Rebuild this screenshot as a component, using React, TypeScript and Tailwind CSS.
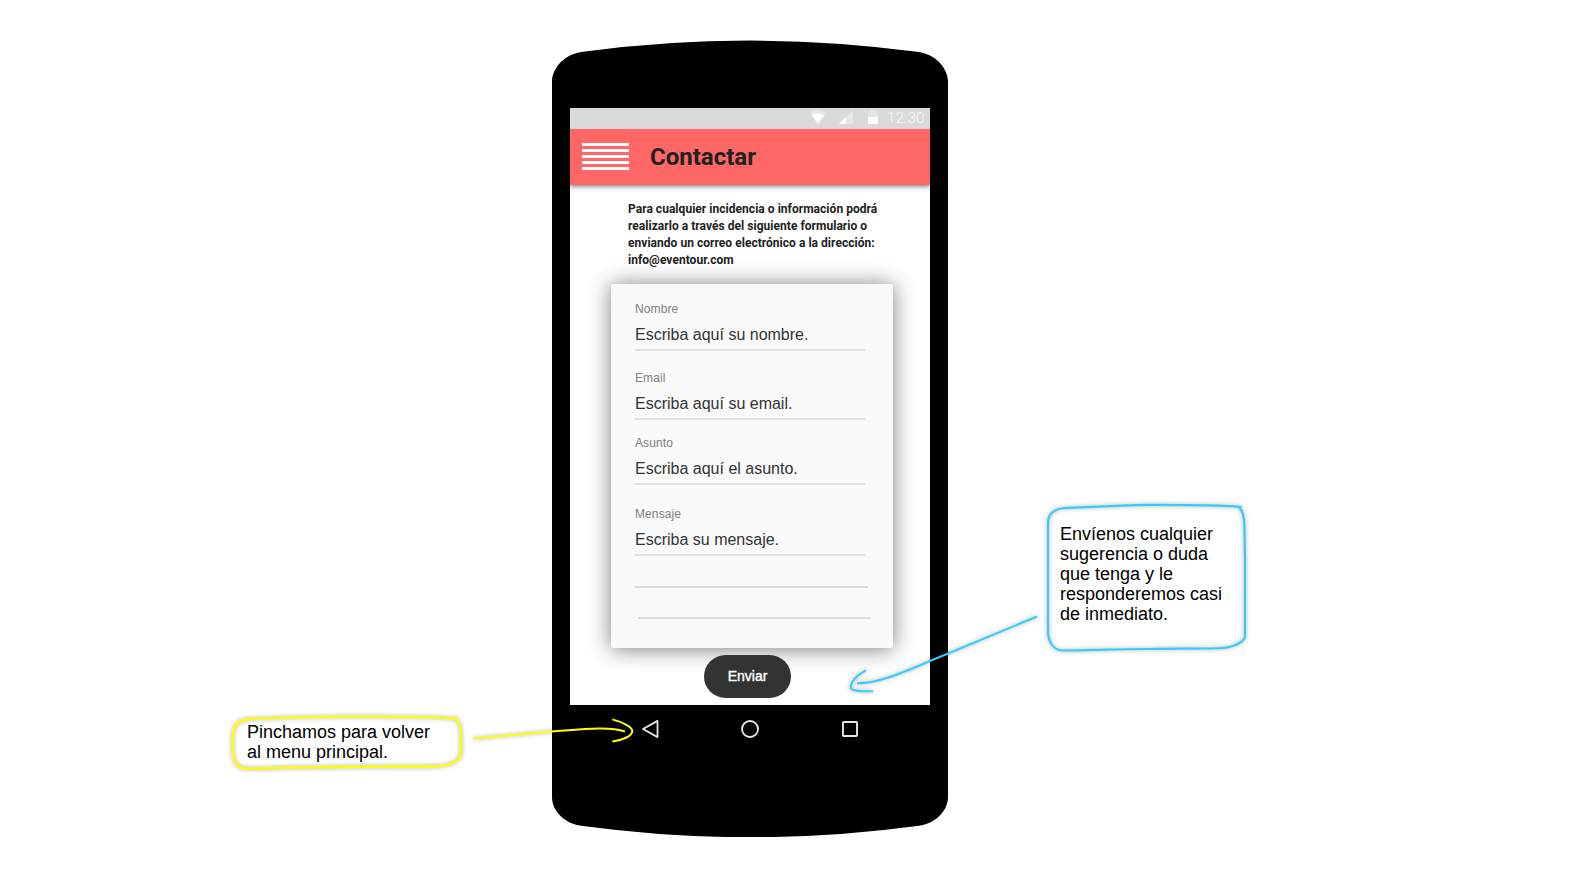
import type { ReactNode } from "react";

const sans = "font-['Liberation_Sans',Arial,sans-serif]";
const roboto = "font-[Roboto,sans-serif]";

function StatusBar() {
  return (
    <div className="relative z-10 flex h-[21px] items-start bg-[#dadada] pl-[240px]">
      <svg className="mt-[2px] h-[14px] w-4 shrink-0" viewBox="0 0 16 14">
        <path d="M0 3.2C4.6 -.6 11.4 -.6 16 3.2L8 14Z" fill="#e6e6e6" />
        <path d="M1.8 5.4C5.7 2.6 10.3 2.6 14.2 5.4L8 13.8Z" fill="#fff" />
      </svg>
      <svg className="ml-[13px] mt-[2px] h-[14px] w-[14px] shrink-0" viewBox="0 0 14 14">
        <path d="M14 0V14H0Z" fill="#e6e6e6" />
        <path d="M7 7V14H0Z" fill="#fff" />
      </svg>
      <svg className="ml-[15px] mt-[2px] h-[14px] w-[10px] shrink-0" viewBox="0 0 10 14">
        <path d="M3 0H7L8 1Q10 1.4 10 3V7H0V3Q0 1.4 2 1Z" fill="#e6e6e6" />
        <path d="M0 7H10V13Q10 14 9 14H1Q0 14 0 13Z" fill="#fff" />
      </svg>
      <span className={`ml-[9px] text-[15px] leading-5 font-light tracking-[0.2px] text-[#f8f8f8] ${roboto}`}>
        12:30
      </span>
    </div>
  );
}

function Header() {
  return (
    <header className="relative flex h-14 shrink-0 items-center bg-[#ff6666] pl-3 shadow-[0_1px_5px_rgba(0,0,0,0.6)]">
      <div className="flex w-[47px] flex-col gap-[3px] pb-px">
        {[0, 1, 2, 3, 4].map((i) => (
          <span key={i} className="h-[3px] bg-white" />
        ))}
      </div>
      <h1 className={`ml-[21px] text-2xl leading-7 font-bold text-[#212121] ${roboto}`}>Contactar</h1>
    </header>
  );
}

function Field({ label, value, className }: { label: string; value: string; className: string }) {
  return (
    <div className={`w-[230px] border-b-2 border-[#e0e0e0] ${className}`}>
      <div className="h-[14px] text-xs leading-[14px] tracking-[0.1px] text-[#808080]">{label}</div>
      <div className="mt-[10px] h-[23px] text-base leading-[18px] text-[#333]">{value}</div>
    </div>
  );
}

function Form() {
  return (
    <div className="ml-[41px] mt-[15px] flex h-[364px] w-[282px] shrink-0 flex-col rounded-[2px] bg-[#fafafa] pl-6 pt-[18px] shadow-[0_1px_22px_rgba(0,0,0,0.52)]">
      <Field label="Nombre" value="Escriba aquí su nombre." className="" />
      <Field label="Email" value="Escriba aquí su email." className="mt-5" />
      <Field label="Asunto" value="Escriba aquí el asunto." className="mt-4" />
      <Field label="Mensaje" value="Escriba su mensaje." className="mt-[22px]" />
      <div className="mt-[30px] h-[2px] w-[233px] bg-[#dcdcdc]" />
      <div className="ml-[3px] mt-[29px] h-[2px] w-[233px] bg-[#dcdcdc]" />
    </div>
  );
}

function NavBar() {
  return (
    <nav className="relative mt-[14px] flex items-center pl-[89px]">
      <svg className="h-5 w-5" viewBox="0 0 20 20" fill="none" stroke="#e6e6e6" strokeWidth="1.8" strokeLinejoin="round">
        <path d="M2 10L16.5 1.9V18.1Z" />
      </svg>
      <svg className="ml-[79px] h-5 w-5" viewBox="0 0 20 20" fill="none" stroke="#e6e6e6" strokeWidth="1.9">
        <circle cx="10" cy="10" r="8" />
      </svg>
      <svg className="ml-[80px] h-5 w-5" viewBox="0 0 20 20" fill="none" stroke="#e6e6e6" strokeWidth="1.9">
        <rect x="3" y="3" width="14" height="14" rx="0.8" />
      </svg>
    </nav>
  );
}

function Phone() {
  return (
    <div className="relative ml-[89px] mt-10 h-[797px] w-[396px] shrink-0">
      <svg className="absolute inset-0 h-full w-full" viewBox="552 40 396 797">
        <path d="M552 82C552 67 566 53.5 583 51.8Q750 29.4 917 51.8C934 53.5 948 67 948 82V797C948 812 934 824.5 917 826Q750 848.5 583 826C566 824.5 552 812 552 797Z" />
      </svg>
      <div className="relative px-[18px] pt-[68px]">
        <div className="flex h-[597px] flex-col overflow-hidden bg-white">
          <StatusBar />
          <Header />
          <p
            className={`ml-[58px] mt-4 text-xs leading-[17px] font-bold tracking-[0.035px] text-[#212121] ${roboto}`}
          >
            Para cualquier incidencia o información podrá
            <br />
            realizarlo a través del siguiente formulario o
            <br />
            enviando un correo electrónico a la dirección:
            <br />
            info@eventour.com
          </p>
          <Form />
          <button className="ml-[134px] mt-[7px] h-[43px] w-[87px] shrink-0 rounded-full bg-[#333] pb-[2px] text-sm text-white [-webkit-text-stroke:0.4px_white]">
            Enviar
          </button>
        </div>
      </div>
      <NavBar />
    </div>
  );
}

function Note({ className, outline, children }: { className: string; outline: ReactNode; children: ReactNode }) {
  return (
    <aside className={`relative shrink-0 text-lg leading-5 whitespace-nowrap text-black ${className}`}>
      {outline}
      <p className="relative">{children}</p>
    </aside>
  );
}

const ink = "[filter:drop-shadow(0_0_2px_rgba(0,0,0,0.35))]";

export default function App() {
  return (
    <main className={`relative flex h-[876px] w-[1590px] items-start overflow-hidden bg-white ${sans}`}>
      <Note
        className="ml-[231px] mt-[714px] h-[57px] w-[232px] pl-4 pt-[8px]"
        outline={
          <svg className={`absolute inset-0 h-full w-full overflow-visible ${ink}`} viewBox="231 714 232 57" fill="none" stroke="#ffff00" strokeWidth="2.4">
            <path d="M458 718.8C435 716.5 400 716.5 350 716.6C300 717 260 718 246 719.5C236 721.5 233 728 232.8 735V749C233 759 236 768 245 768.5C270 768.5 290 767 340 767C390 766 425 767 440 766C450 765 461 761 461 752V740C461 730 461 724 455.5 718" />
          </svg>
        }
      >
        Pinchamos para volver
        <br />
        al menu principal.
      </Note>
      <Phone />
      <Note
        className="ml-[99px] mt-[503px] h-[149px] w-[200px] pl-[13px] pt-[21px]"
        outline={
          <svg className={`absolute inset-0 h-full w-full overflow-visible ${ink}`} viewBox="1047 503 200 149" fill="none" stroke="#33ccff" strokeWidth="2.2">
            <path d="M1241.5 507.2C1230 505 1205 504.8 1150 504.8C1115 505.5 1090 507 1065 508C1053 509 1048 514 1048 523V630C1048 640 1052 650 1062 650.5C1090 650.5 1110 649 1150 649C1175 648.5 1200 649 1222 648C1233 647.5 1245 642 1245 636V560L1244.4 526C1244 516 1243 512 1239 506.5" />
          </svg>
        }
      >
        Envíenos cualquier
        <br />
        sugerencia o duda
        <br />
        que tenga y le
        <br />
        responderemos casi
        <br />
        de inmediato.
      </Note>
      <svg className={`pointer-events-none absolute inset-0 h-full w-full ${ink}`} viewBox="0 0 1590 876" fill="none" strokeWidth="2">
        <g stroke="#ffff00">
          <path d="M473 738.6L552 731.5C580 729.5 609 726 625 731.5" />
          <path d="M612.3 719.4C622 722 632.3 727 632.3 731C632.3 736 622 740.5 612.3 741.5" />
        </g>
        <g stroke="#33ccff">
          <path d="M1037 616.5L930 661C900 674 875 684 857 683.3" />
          <path d="M866 670.3C853 677 848 687 852 689.5C855 691 863 691.5 873 691.3" />
        </g>
      </svg>
    </main>
  );
}
